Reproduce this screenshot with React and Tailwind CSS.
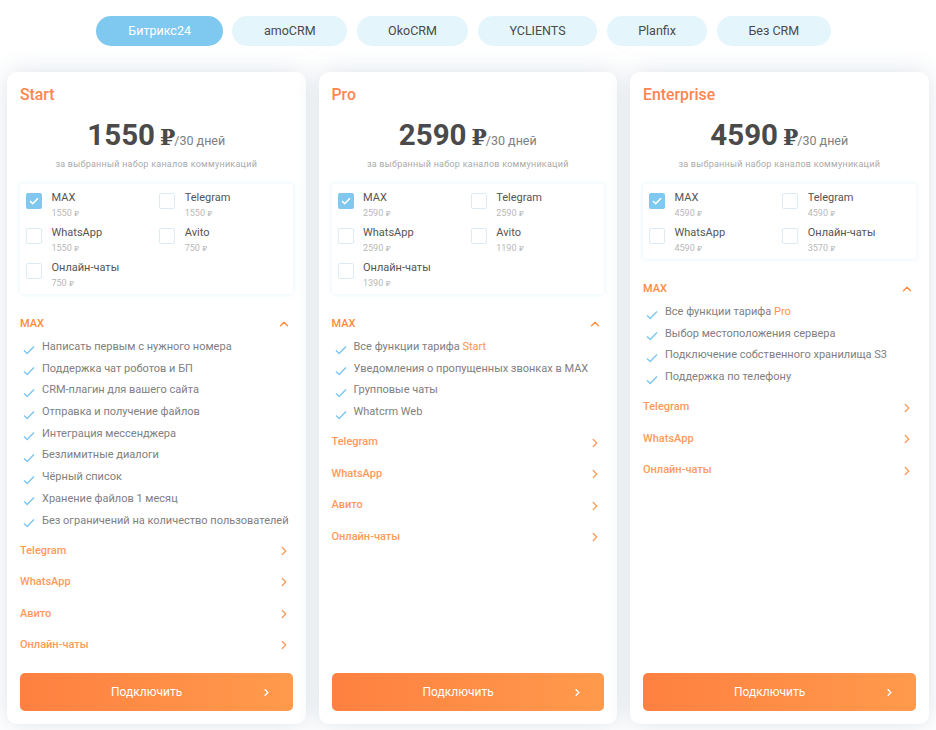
import React from "react";
import { ChevronRight, ChevronUp } from "lucide-react";

const tabs = ["Битрикс24", "amoCRM", "OkoCRM", "YCLIENTS", "Planfix", "Без CRM"];

const plans = [
  {
    name: "Start",
    price: "1550",
    channels: [
      ["MAX", "1550", true],
      ["Telegram", "1550"],
      ["WhatsApp", "1550"],
      ["Avito", "750"],
      ["Онлайн-чаты", "750"],
    ],
    open: "MAX",
    features: [
      ["Написать первым с нужного номера"],
      ["Поддержка чат роботов и БП"],
      ["CRM-плагин для вашего сайта"],
      ["Отправка и получение файлов"],
      ["Интеграция мессенджера"],
      ["Безлимитные диалоги"],
      ["Чёрный список"],
      ["Хранение файлов 1 месяц"],
      ["Без ограничений на количество пользователей"],
    ],
    closed: ["Telegram", "WhatsApp", "Авито", "Онлайн-чаты"],
  },
  {
    name: "Pro",
    price: "2590",
    channels: [
      ["MAX", "2590", true],
      ["Telegram", "2590"],
      ["WhatsApp", "2590"],
      ["Avito", "1190"],
      ["Онлайн-чаты", "1390"],
    ],
    open: "MAX",
    features: [
      ["Все функции тарифа ", "Start"],
      ["Уведомления о пропущенных звонках в MAX"],
      ["Групповые чаты"],
      ["Whatcrm Web"],
    ],
    closed: ["Telegram", "WhatsApp", "Авито", "Онлайн-чаты"],
  },
  {
    name: "Enterprise",
    price: "4590",
    channels: [
      ["MAX", "4590", true],
      ["Telegram", "4590"],
      ["WhatsApp", "4590"],
      ["Онлайн-чаты", "3570"],
    ],
    open: "MAX",
    features: [
      ["Все функции тарифа ", "Pro"],
      ["Выбор местоположения сервера"],
      ["Подключение собственного хранилища S3"],
      ["Поддержка по телефону"],
    ],
    closed: ["Telegram", "WhatsApp", "Онлайн-чаты"],
  },
];

const Channel = ({ label, price, checked }) => (
  <div className="flex h-[30px] items-start">
    <div
      className={
        checked
          ? "mt-[2px] flex h-4 w-4 items-center justify-center rounded-[2px] bg-[#7fc8ef]"
          : "mt-[2px] h-4 w-4 rounded-[2px] border border-[#dcebf3] bg-white"
      }
    >
      {checked && (
        <svg width="10" height="8" viewBox="0 0 10 8" fill="none">
          <path d="M1 4l2.7 2.7L9 1.2" stroke="white" strokeWidth="1.6" />
        </svg>
      )}
    </div>
    <div className="ml-[9.5px]">
      <div className="text-[11px] leading-[14px] text-[#555555]">{label}</div>
      <div className="mt-[1px] text-[9px] leading-[14px] text-[#b8b8b8]">
        {price} <span className="font-['DejaVu_Serif',serif] text-[8px]">₽</span>
      </div>
    </div>
  </div>
);

const Feature = ({ text, accent }) => (
  <li className="flex h-[21.7px] items-start">
    <svg className="mt-[4.5px] shrink-0" width="12" height="10" viewBox="0 0 12 10" fill="none">
      <path d="M1 5.5l3.2 3L11 1.5" stroke="#7fc8ef" strokeWidth="1.5" />
    </svg>
    <span className="ml-[7px] text-[11px] leading-[14px] whitespace-nowrap text-[#808080]">
      {text}
      {accent && <span className="text-[#ff9448]">{accent}</span>}
    </span>
  </li>
);

const PlanCard = ({ plan }) => (
  <div className="flex h-[652px] w-[298.5px] flex-col rounded-[10px] bg-white px-[13px] pt-[13px] pb-[13px] shadow-[0_0_24px_rgba(170,185,200,0.4)]">
    <div className="text-[15.8px] leading-[19px] font-medium text-[#ff8450]">{plan.name}</div>
    <div className="mt-[14px] flex items-baseline justify-center text-[#4a4a4a]">
      <span className="text-[29.5px] leading-[35px] font-bold">{plan.price}</span>
      <span className="ml-[5px] text-[22px] leading-[35px] font-bold font-['DejaVu_Serif',serif]">₽</span>
      <span className="-ml-[1px] text-[12.5px] text-[#808080]">/30 дней</span>
    </div>
    <div className="mt-[3px] text-center text-[9px] leading-[12px] tracking-[0.25px] text-[#aaaaaa]">
      за выбранный набор каналов коммуникаций
    </div>
    <div className="mt-[14px] grid grid-cols-2 gap-y-[5px] rounded-[2px] bg-white pt-[7px] pl-[6px] pb-[3px] shadow-[0_0_5px_rgba(127,200,239,0.22)]">
      {plan.channels.map(([label, price, checked]) => (
        <Channel key={label} label={label} price={price} checked={checked} />
      ))}
    </div>
    <div className="mt-[23px] flex h-[14px] items-center justify-between pr-[2px]">
      <span className="text-[11px] font-medium text-[#ff8a3c]">{plan.open}</span>
      <ChevronUp size={14} strokeWidth={2.2} className="text-[#ff8a3c]" />
    </div>
    <ul className="mt-[9px] pl-[3px]">
      {plan.features.map(([text, accent]) => (
        <Feature key={text} text={text} accent={accent} />
      ))}
    </ul>
    <div>
      {plan.closed.map((label) => (
        <div key={label} className="flex h-[31.5px] items-center justify-between pr-[2px]">
          <span className="text-[11px] font-medium text-[#ff9a5c]">{label}</span>
          <ChevronRight size={14} strokeWidth={2.2} className="text-[#ff9a5c]" />
        </div>
      ))}
    </div>
    <button className="mt-auto flex h-[38px] w-full items-center justify-between rounded-[5px] bg-gradient-to-r from-[#ff8040] to-[#ff9a4c] pr-[21px] pl-[91px] text-[12px] text-white">
      Подключить
      <ChevronRight size={11} strokeWidth={3} />
    </button>
  </div>
);

export default function App() {
  return (
    <div className="h-[730px] w-[936px] overflow-hidden bg-white font-['Roboto',sans-serif]">
      <div className="flex justify-center gap-[9.5px] pt-[16px] pr-[9px]">
        {tabs.map((tab, i) => (
          <div
            key={tab}
            className={
              i === 0
                ? "flex h-[30px] items-center rounded-full bg-[#7fc8ef] px-[32px] text-[12.5px] text-white"
                : "flex h-[30px] items-center rounded-full bg-[#e4f6fc] px-[31.5px] text-[12.5px] text-[#4a4a4a]"
            }
          >
            {tab}
          </div>
        ))}
      </div>
      <div className="mt-[26px] flex gap-[13px] pl-[7px]">
        {plans.map((plan) => (
          <PlanCard key={plan.name} plan={plan} />
        ))}
      </div>
    </div>
  );
}
